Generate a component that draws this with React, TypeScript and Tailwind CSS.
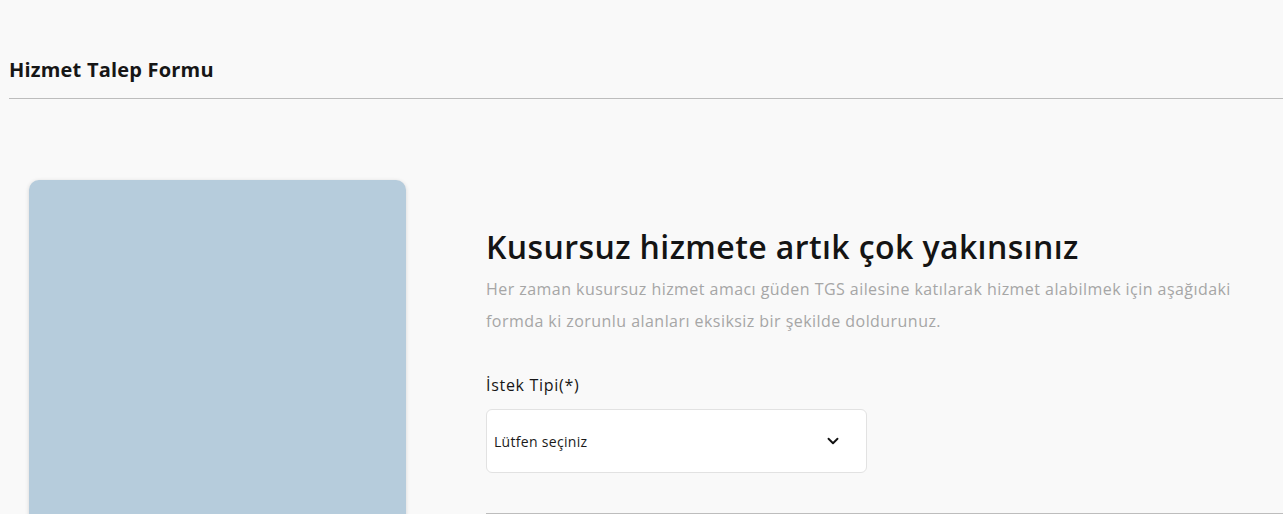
import React from 'react';
import { ChevronDown } from 'lucide-react';

const font = { fontFamily: '"Open Sans", "Noto Sans", sans-serif' };

export default function App() {
  return (
    <div className="min-h-screen bg-[#f9f9f9] overflow-hidden" style={font}>
      <div className="pl-[9px] pt-[56px]">
        <h1 className="text-[20px] font-bold text-[#161616] leading-[28px] pb-[14px] tracking-[0.2px]">
          Hizmet Talep Formu
        </h1>
        <div className="h-px bg-[#bdbdbd]" />
      </div>

      <div className="flex pt-[81px]">
        <div className="pl-[29px] w-[486px] shrink-0">
          <div className="w-[377px] h-[400px] rounded-[10px] bg-[#b6ccdc] shadow-[0_1px_4px_rgba(0,0,0,0.15)]" />
        </div>

        <div className="flex-1 pt-[47px]">
          <h2 className="text-[32px] font-semibold text-[#141414] leading-[40px] tracking-[0.4px]">
            Kusursuz hizmete artık çok yakınsınız
          </h2>
          <p className="mt-[6px] text-[16px] text-[#a6a6a6] leading-[32px] max-w-[785px] tracking-[0.45px]">
            Her zaman kusursuz hizmet amacı güden TGS ailesine katılarak hizmet alabilmek için aşağıdaki formda ki zorunlu alanları eksiksiz bir şekilde doldurunuz.
          </p>

          <label className="block mt-[38px] text-[16px] font-medium text-[#161616] leading-[20px] tracking-[0.7px]">
            İstek Tipi(*)
          </label>
          <div className="mt-[14px] w-[381px] h-[64px] bg-white border border-[#e2e2e2] rounded-[6px] flex items-center justify-between pl-[7px] pr-[24px]">
            <span className="text-[14px] text-[#1a1a1a] tracking-[0.3px]">Lütfen seçiniz</span>
            <ChevronDown className="w-[18px] h-[18px] text-[#111]" strokeWidth={2.5} />
          </div>

          <div className="mt-[40px] h-px bg-[#bdbdbd]" />
        </div>
      </div>
    </div>
  );
}
